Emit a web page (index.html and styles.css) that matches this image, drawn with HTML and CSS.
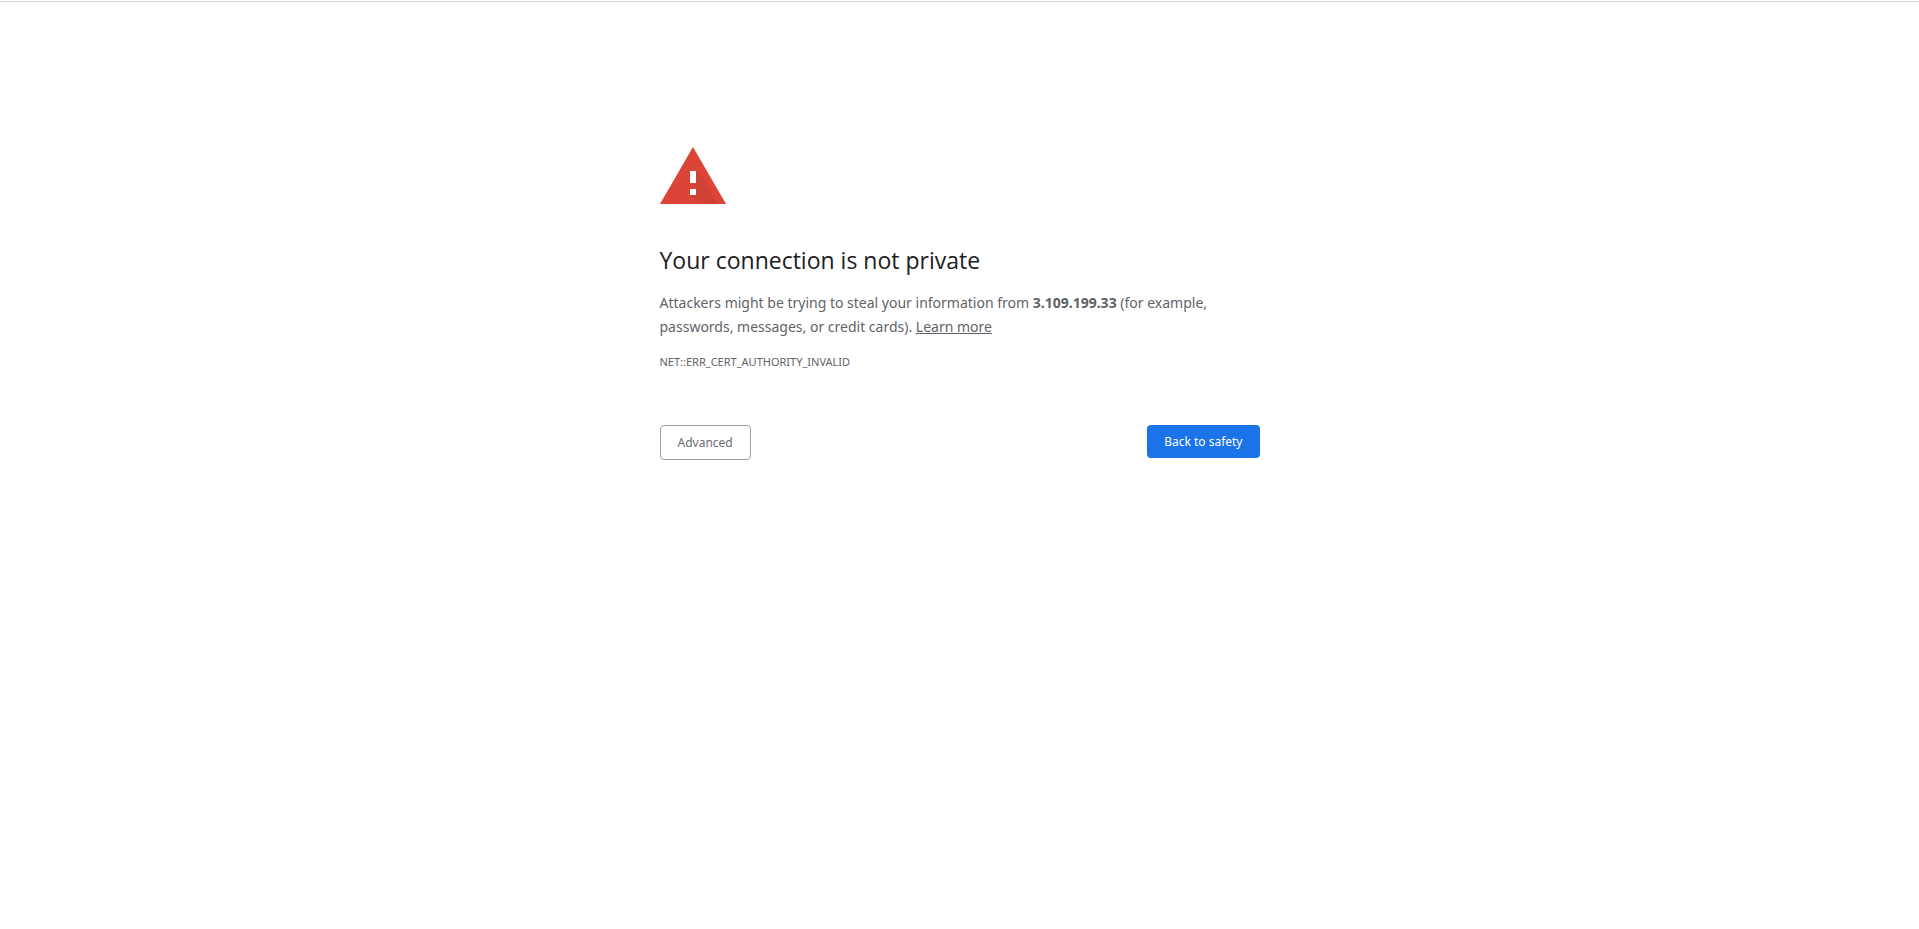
FILE: index.html
```html
<!DOCTYPE html>
<html lang="en">

<head>
    <meta charset="UTF-8">
    <meta name="viewport" content="width=device-width, initial-scale=1.0">
    <title>Privacy error</title>
    <link rel="stylesheet" href="styles.css">
</head>

<body>
    <main class="interstitial">
        <svg class="icon" viewBox="0 0 66 57" aria-hidden="true">
            <path fill="#db4437" d="M33 0L66 57H0z" />
            <path fill="#c53f32" d="M36 24L44 32L51 45L57 57H39L30 48L36 42z" opacity=".6" />
            <path fill="#fff" d="M30 24h6v12h-6zM30 42h6v6h-6z" />
        </svg>
        <h1>Your connection is not private</h1>
        <p>Attackers might be trying to steal your information from <strong>3.109.199.33</strong> (for example,
            passwords, messages, or credit cards). <a href="#">Learn more</a></p>
        <div class="error-code">NET::ERR_CERT_AUTHORITY_INVALID</div>
        <div class="nav">
            <button type="button" class="btn btn-secondary">Advanced</button>
            <button type="button" class="btn btn-primary">Back to safety</button>
        </div>
    </main>
</body>

</html>
```

FILE: styles.css
```css
* {
    box-sizing: border-box;
}

body {
    margin: 1px 0 0;
    border-top: 1px solid #d5d6d8;
    background: #fff;
    color: #5f6368;
    font-family: "Segoe UI", "Noto Sans", sans-serif;
    font-size: 14px;
    line-height: 24px;
}

.interstitial {
    max-width: 600px;
    margin: 0 auto;
    padding-top: 145px;
}

.icon {
    display: block;
    width: 66px;
    height: 57px;
}

h1 {
    margin: 40px 0 15px;
    color: #202124;
    font-family: "Segoe UI", "Open Sans", sans-serif;
    font-size: 23px;
    font-weight: 400;
    line-height: 32px;
}

p {
    margin: 0;
}

a {
    color: inherit;
}

.error-code {
    margin-top: 11px;
    font-size: 11px;
}

.nav {
    display: flex;
    justify-content: space-between;
    align-items: flex-start;
    margin-top: 51px;
}

.btn {
    padding: 8px 17px;
    border: 0;
    border-radius: 4px;
    font-family: inherit;
    font-size: 12px;
    line-height: 17px;
    cursor: pointer;
}

.btn-primary {
    background: #1a73e8;
    color: #fff;
}

.btn-secondary {
    border: 1px solid #9aa0a6;
    background: #fff;
    color: #696e73;
}
```
